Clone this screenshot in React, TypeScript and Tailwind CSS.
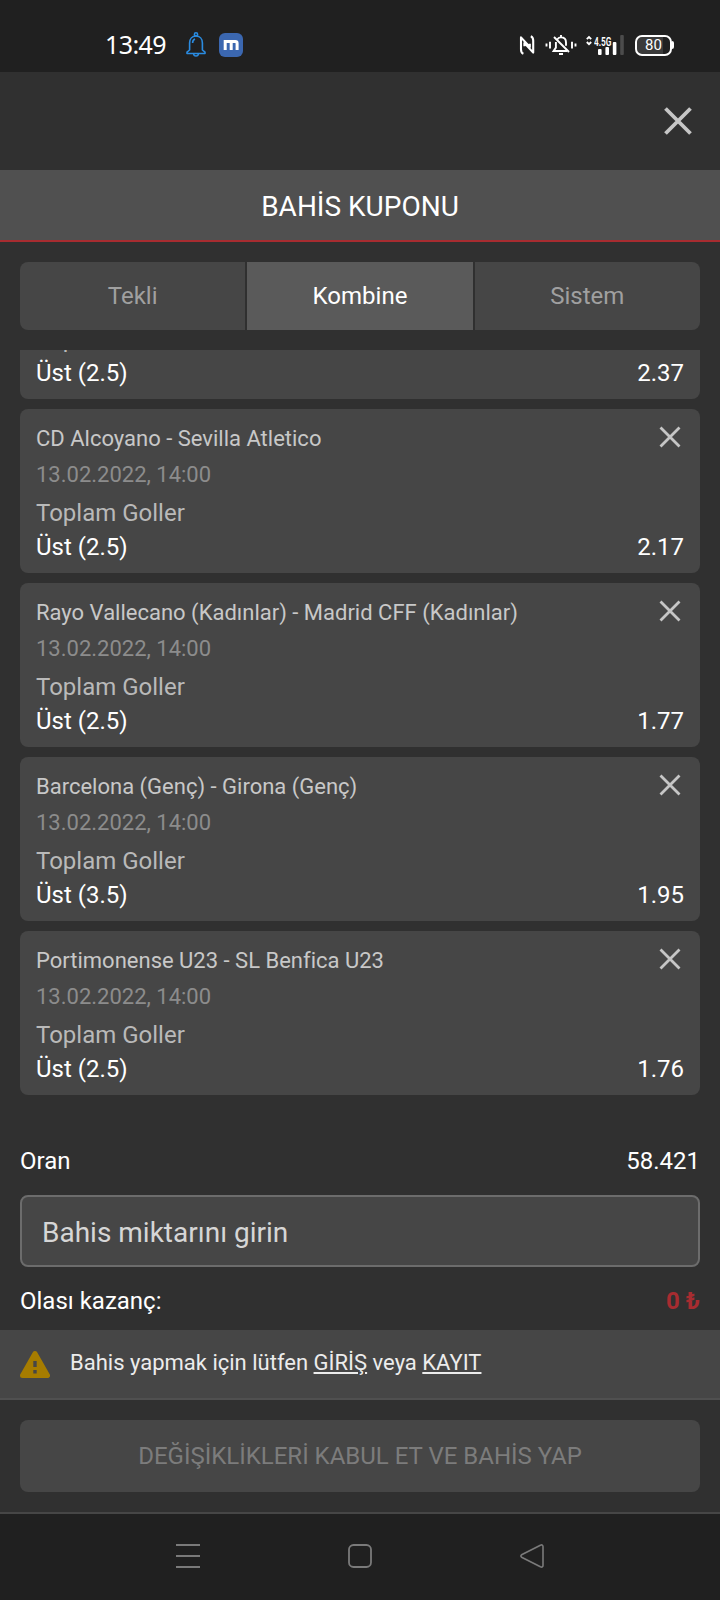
import React from 'react';

interface Bet {
  match: string;
  date: string;
  market: string;
  pick: string;
  odds: string;
}

const bets: Bet[] = [
  { match: 'CD Alcoyano - Sevilla Atletico', date: '13.02.2022, 14:00', market: 'Toplam Goller', pick: 'Üst (2.5)', odds: '2.17' },
  { match: 'Rayo Vallecano (Kadınlar) - Madrid CFF (Kadınlar)', date: '13.02.2022, 14:00', market: 'Toplam Goller', pick: 'Üst (2.5)', odds: '1.77' },
  { match: 'Barcelona (Genç) - Girona (Genç)', date: '13.02.2022, 14:00', market: 'Toplam Goller', pick: 'Üst (3.5)', odds: '1.95' },
  { match: 'Portimonense U23 - SL Benfica U23', date: '13.02.2022, 14:00', market: 'Toplam Goller', pick: 'Üst (2.5)', odds: '1.76' },
];

const StatusBar = () => (
  <div className="flex h-[72px] items-center bg-[#202020] pt-[18px] pr-[46px] pl-[105px] text-white">
    <span className="mb-[2px] w-[81px] font-['Noto_Sans',sans-serif] text-[25px] leading-[50px] tracking-[-0.6px]">13:49</span>
    <svg width="20" height="26" viewBox="0 0 20 26" fill="none" stroke="#2a8be0" strokeWidth="1.6">
      <circle cx="10" cy="2.4" r="1.6" />
      <path d="M3.6 18V11C3.6 6.8 6.2 4 10 4s6.4 2.8 6.4 7v7l2.6 2.2v1.3H1v-1.3z" strokeLinejoin="round" />
      <path d="M7.6 21.8c.2 3 4.6 3 4.8 0M6.6 11c0-2 .8-3.4 2.4-4" />
    </svg>
    <svg className="ml-[13px]" width="24" height="24" viewBox="0 0 24 24">
      <rect width="24" height="24" rx="6" fill="#3b67b0" />
      <path d="M6.2 17V8.6h10.1q1.8 0 1.8 1.8V17M12.2 9v8" fill="none" stroke="#fff" strokeWidth="3" />
    </svg>
    <div className="ml-auto flex items-center">
      {/* nfc */}
      <svg width="16" height="20" viewBox="0 0 16 20" fill="none" stroke="#fff" strokeWidth="2.1" strokeLinejoin="round">
        <path d="M4.4 18.8Q2 17.8 2 14.5V2.4L10.8 12V8.8" />
        <path d="M11.8 1.2Q14.2 2.200 14.2 5.500v12.100L5.400 8v3.200" />
      </svg>
      {/* muted bell */}
      <svg className="ml-[10px]" width="32" height="22" viewBox="0 0 32 22" fill="none" stroke="#fff" strokeWidth="1.9">
        <path d="M1.5 9.5v3M5 7.8v6.6M27 7.8v6.6M30.5 9.5v3" />
        <path d="M12.4 5.2C13.3 4 14.5 3.4 16 3.4c3.2 0 5 2.2 5 5v3.4M10.9 8v5.6L8.6 17h13.4M16 3.4V1M14 20h4M9 3l15 15" />
      </svg>
      {/* signal */}
      <div className="relative ml-[9px] h-5 w-[38px]">
        <svg width="38" height="20" viewBox="0 0 38 20">
          <path d="M.8 4.2 3 2l2.2 2.2M.8 7 3 9.2 5.2 7" fill="none" stroke="#fff" strokeWidth="1.8" />
          <rect x="12" y="14" width="3.6" height="6" rx="1" fill="#fff" />
          <rect x="19.4" y="12" width="3.6" height="8" rx="1" fill="#fff" />
          <rect x="26.8" y="7" width="3.6" height="13" rx="1" fill="#fff" />
          <rect x="34.2" y="0" width="3.6" height="20" rx="1" fill="#4c4c4c" />
        </svg>
        <span className="absolute -top-px left-[8px] origin-left scale-x-[0.64] font-['Roboto',sans-serif] text-[13px] leading-[15px] font-semibold">4.5G</span>
      </div>
      {/* battery */}
      <div className="ml-[11px] flex items-center">
        <div className="h-[21px] w-[37px] rounded-[7px] border-2 border-white bg-linear-to-r from-[#3b3b3b] from-80% to-[#202020] to-80% text-center font-['Roboto',sans-serif] text-[15px] leading-[17px] font-normal">80</div>
        <div className="h-2 w-[2px] rounded-r-sm bg-white" />
      </div>
    </div>
  </div>
);

const CloseIcon = ({ size, stroke }: { size: number; stroke: number }) => (
  <svg width={size} height={size} viewBox={`0 0 ${size} ${size}`} fill="none" stroke="#c6c6c6" strokeWidth={stroke}>
    <path d={`M1.5 1.5 ${size - 1.5} ${size - 1.5}M${size - 1.5} 1.5 1.5 ${size - 1.5}`} />
  </svg>
);

const BetCard = ({ bet }: { bet: Bet }) => (
  <div className="h-[164px] shrink-0 rounded-lg bg-[#464646] px-4 pt-3">
    <div className="flex justify-between">
      <p className="text-[22px] leading-9 text-[#c8c8c8]">{bet.match}</p>
      <button className="mt-[5px] mr-[3px] h-[22px]">
        <CloseIcon size={22} stroke={2.8} />
      </button>
    </div>
    <p className="text-[22px] leading-9 text-[#8c8c8c]">{bet.date}</p>
    <p className="mt-[3px] text-[24px] leading-[34px] text-[#b9b9b9]">{bet.market}</p>
    <div className="flex justify-between text-[24px] leading-[34px] text-white">
      <span>{bet.pick}</span>
      <span>{bet.odds}</span>
    </div>
  </div>
);

const App: React.FC = () => {
  return (
    <div className="flex h-[1600px] w-[720px] flex-col overflow-hidden bg-[#303030] font-['Roboto',sans-serif] text-white [font-variant-ligatures:none]">
      <StatusBar />

      <div className="flex h-[98px] items-center justify-end pr-[28px]">
        <button>
          <CloseIcon size={28} stroke={3.8} />
        </button>
      </div>

      <h1 className="h-[72px] border-b-2 border-[#a72c30] bg-[#505050] text-center text-[28px] leading-[74px]">BAHİS KUPONU</h1>

      {/* tabs */}
      <div className="mx-5 mt-5 grid h-[68px] grid-cols-3 gap-[2px] overflow-hidden rounded-lg text-center text-[24px] leading-[68px]">
        <div className="bg-[#464646] text-[#a0a0a0]">Tekli</div>
        <div className="bg-[#5a5a5a]">Kombine</div>
        <div className="bg-[#464646] text-[#a0a0a0]">Sistem</div>
      </div>

      {/* bet list, scrolled to the end */}
      <div className="mx-5 mt-5 flex h-[745px] flex-col gap-[10px] overflow-hidden">
        <div className="flex h-[49px] shrink-0 flex-col justify-end overflow-hidden rounded-b-lg bg-[#464646] px-4 pb-[9px] text-[24px] leading-[34px]">
          <p className="shrink-0 text-[#b9b9b9]">Toplam Goller</p>
          <div className="flex shrink-0 justify-between">
            <span>Üst (2.5)</span>
            <span>2.37</span>
          </div>
        </div>
        {bets.map((bet) => (
          <BetCard key={bet.match} bet={bet} />
        ))}
      </div>

      <div className="mx-5 mt-[49px] flex h-[34px] justify-between text-[24px] leading-[34px]">
        <span>Oran</span>
        <span>58.421</span>
      </div>

      <div className="mx-5 mt-[17px] h-[72px] rounded-lg border-2 border-[#6c6c6c] bg-[#464646] px-5 text-[28px] leading-[72px] text-[#d6d6d6]">
        Bahis miktarını girin
      </div>

      <div className="mx-5 mt-[17px] flex h-[34px] justify-between text-[24px] leading-[34px]">
        <span>Olası kazanç:</span>
        <span className="font-bold text-[#a72c30]">0 ₺</span>
      </div>

      <div className="mt-3 flex h-[70px] border-b-2 border-[#505050] bg-[#464646] px-5">
        <svg className="mt-5" width="30" height="28" viewBox="0 0 30 28">
          <path d="M15 3.5 27.5 25.500H2.500z" fill="#a67c00" stroke="#a67c00" strokeWidth="5" strokeLinejoin="round" />
          <path d="M15 11v6M15 20v3.4" stroke="#464646" strokeWidth="3.4" />
        </svg>
        <p className="ml-5 text-[22px] leading-[66px] text-[#ececec]">
          Bahis yapmak için lütfen <a className="underline">GİRİŞ</a> veya <a className="underline">KAYIT</a>
        </p>
      </div>

      <button className="mx-5 mt-5 h-[72px] rounded-lg bg-[#464646] text-[24px] leading-[72px] text-[#7c7c7c]">
        DEĞİŞİKLİKLERİ KABUL ET VE BAHİS YAP
      </button>

      {/* android navigation */}
      <div className="mt-5 flex h-[88px] justify-between border-t-2 border-[#464646] bg-[#202020] px-[176px] pt-[30px]">
        <svg width="24" height="24" viewBox="0 0 24 24" stroke="#7a7a7a" strokeWidth="2">
          <path d="M0 1h24M0 12h24M0 23h24" />
        </svg>
        <svg width="24" height="24" viewBox="0 0 24 24" fill="none" stroke="#7a7a7a" strokeWidth="1.8">
          <rect x="1" y="1" width="22" height="22" rx="4.5" />
        </svg>
        <svg width="24" height="24" viewBox="0 0 24 24" fill="none" stroke="#7a7a7a" strokeWidth="1.6">
          <path d="M1.6 10.8 20.4 1.2q2.6-1 2.6 1.6v18.4q0 2.6-2.6 1.6L1.6 13.2q-1.4-1.2 0-2.4z" strokeLinejoin="round" />
        </svg>
      </div>
    </div>
  );
};

export default App;
